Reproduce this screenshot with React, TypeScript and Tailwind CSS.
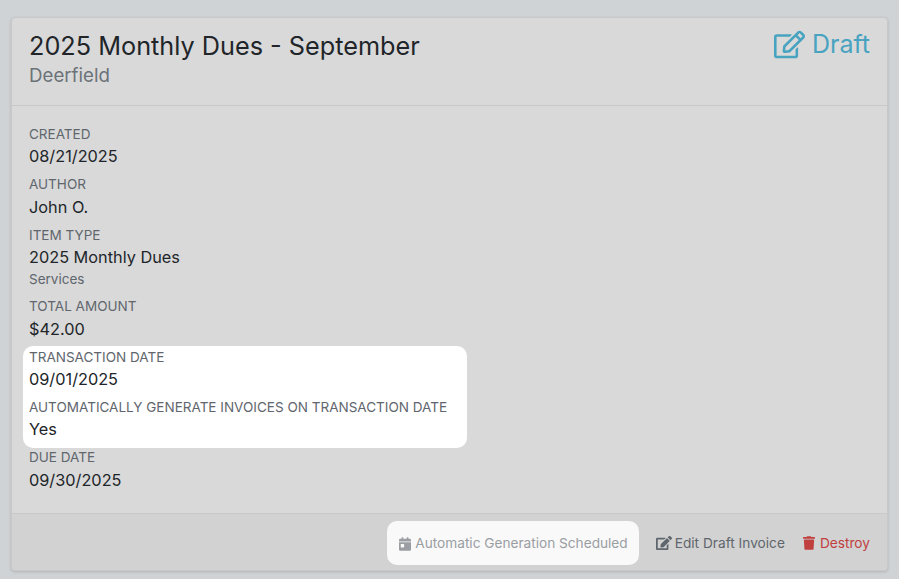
import { FaCalendarDay, FaEdit, FaRegEdit, FaTrash } from "react-icons/fa";

type FieldProps = {
  label: string;
  value: string;
  note?: string;
};

function Field({ label, value, note }: FieldProps) {
  return (
    <div className="pb-[4.9px]">
      <div className="text-[13.53px] leading-[21.4px] uppercase text-[#5f666d]">{label}</div>
      <div className="-mb-px -mt-px text-[16.3px] leading-[24px] text-[#212529]">{value}</div>
      <div className="h-[2px]" />
      {note && <div className="-mt-px pb-px text-[13.53px] leading-[21.4px] text-[#5f666d]">{note}</div>}
    </div>
  );
}

export default function App() {
  return (
    <div className="h-[579px] w-[899px] overflow-hidden bg-[#cfd3d6] px-[11px] pt-[17px] font-['Inter',sans-serif]">
      <div className="flex h-[554px] flex-col rounded-[4px] border border-[#c8c8c8] bg-[#d9d9d9] shadow-[0_1px_3px_rgba(0,0,0,0.15)]">
        <div className="flex h-[88px] flex-shrink-0 justify-between border-b border-[#c8c8c8] px-[17px] pt-[12px]">
          <div>
            <h1 className="text-[25.25px] leading-[33px] text-[#212529]">2025 Monthly Dues - September</h1>
            <p className="text-[18.7px] leading-[25px] text-[#6b7278]">Deerfield</p>
          </div>
          <div className="-mt-[2px] flex h-[33px] items-center gap-[7px] text-[25px] text-[#48a3c0]">
            <FaRegEdit className="h-[31px] w-[31px]" />
            <span>Draft</span>
          </div>
        </div>

        <div className="flex-1 px-[17px] pt-[18px]">
          <Field label="Created" value="08/21/2025" />
          <Field label="Author" value="John O." />
          <Field label="Item Type" value="2025 Monthly Dues" note="Services" />
          <Field label="Total Amount" value="$42.00" />
          <div className="-mx-[6px] -mb-px -mt-px w-[444px] rounded-[10px] bg-white px-[6px] pb-px pt-px">
            <Field label="Transaction Date" value="09/01/2025" />
            <Field label="Automatically Generate Invoices on Transaction Date" value="Yes" />
          </div>
          <Field label="Due Date" value="09/30/2025" />
        </div>

        <div className="flex h-[57px] flex-shrink-0 items-center justify-end rounded-b-[4px] border-t border-[#c8c8c8] bg-[#d2d2d2] pr-[17px] pt-px text-[13.7px]">
          <div className="mr-[17px] flex h-[44px] items-center gap-[4px] rounded-[10px] bg-[#f9f9f9] pl-[12px] pr-[11px] pt-[2px] text-[13.65px] text-[#9a9ea3]">
            <FaCalendarDay className="h-[14px] w-[12px]" />
            <span>Automatic Generation Scheduled</span>
          </div>
          <div className="mr-[18px] flex items-center gap-[3px] pt-[2px] text-[#5f666d]">
            <FaEdit className="h-[16px] w-[16px]" />
            <span>Edit Draft Invoice</span>
          </div>
          <div className="flex items-center gap-[5px] pt-[2px] text-[#c0403f]">
            <FaTrash className="h-[14px] w-[12px]" />
            <span>Destroy</span>
          </div>
        </div>
      </div>
    </div>
  );
}
